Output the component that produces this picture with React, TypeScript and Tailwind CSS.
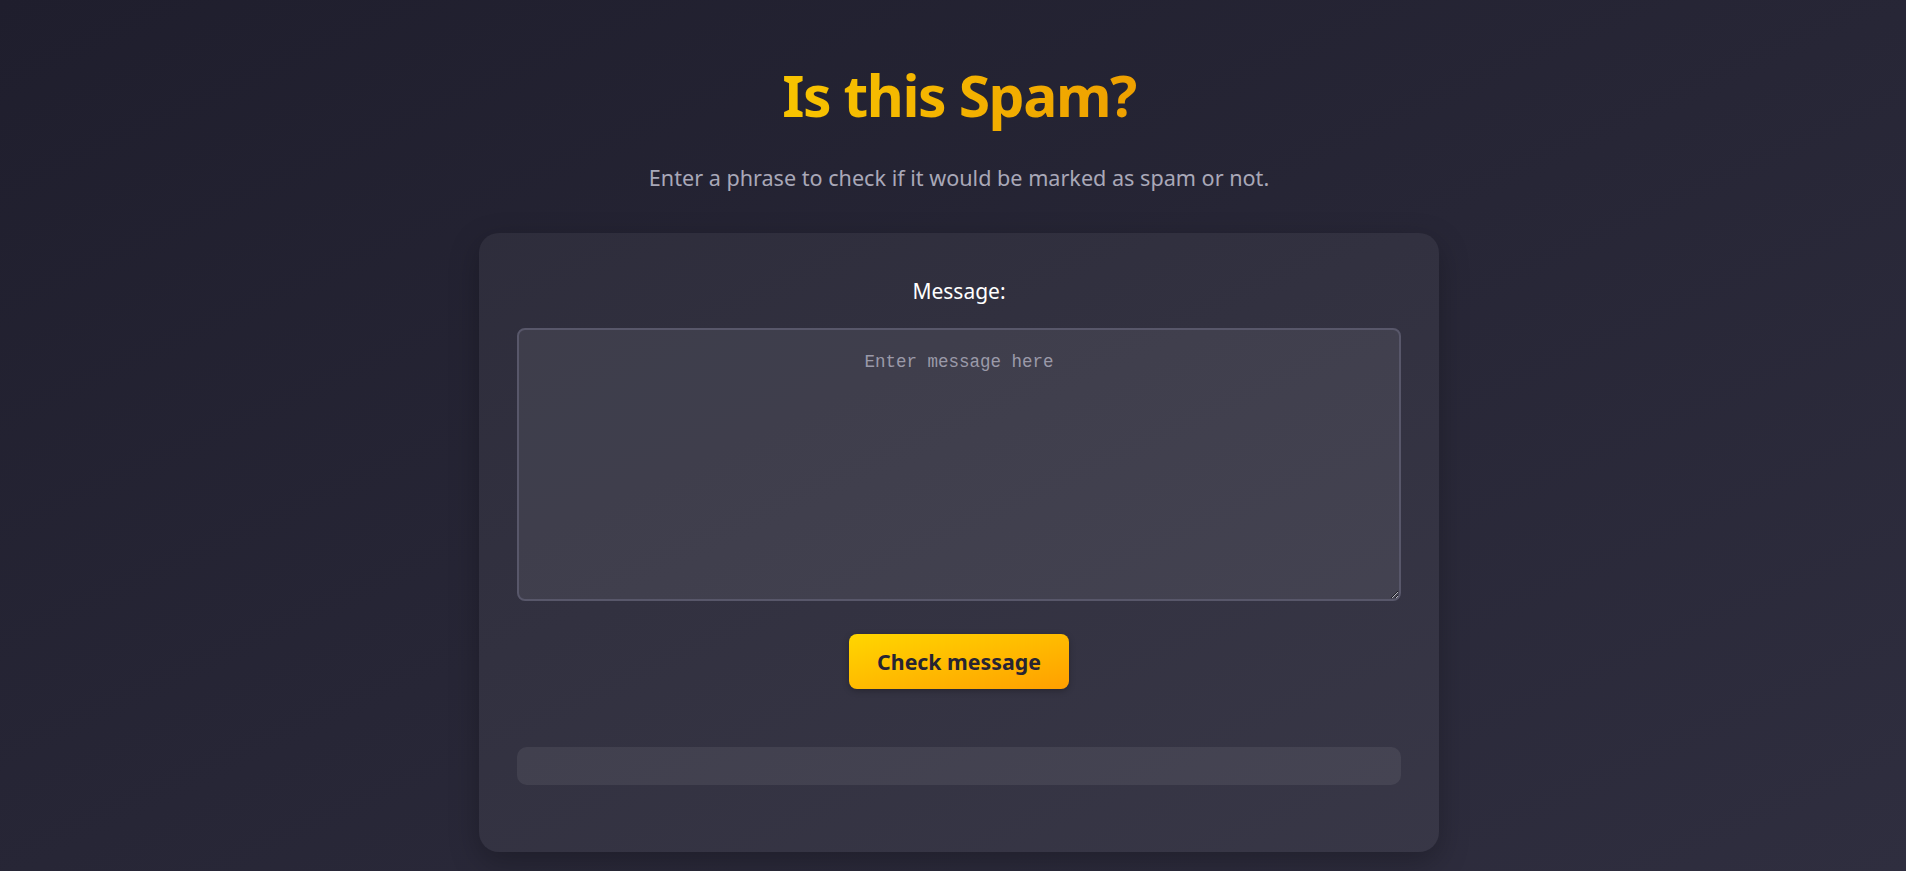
export default function App() {
  return (
    <div
      className="min-h-screen w-full bg-gradient-to-br from-[#1f1e2d] to-[#2f2e3f] pl-3"
      style={{ fontFamily: '"Noto Sans", "Open Sans", sans-serif' }}
    >
      <div className="flex flex-col items-center pt-[59px] pb-5">
        {/* Title */}
        <h1 className="bg-gradient-to-r from-[#f8c400] to-[#eea000] bg-clip-text text-[57px] font-bold leading-[72px] tracking-[-0.025em] text-transparent">
          Is this Spam?
        </h1>
        <p className="mt-[33px] text-[21.6px] leading-[28px] text-[#a9a8b8]">
          Enter a phrase to check if it would be marked as spam or not.
        </p>

        {/* Card */}
        <div className="mt-[41px] flex w-[960px] flex-col items-center rounded-[20px] bg-white/5 px-[38px] pt-[41px] pb-[67px] shadow-[0_10px_30px_rgba(0,0,0,0.25)]">
          <label className="text-[21px] leading-[34px] text-white">Message:</label>
          <textarea
            placeholder="Enter message here"
            className="mt-[20px] h-[273px] w-full rounded-[8px] border-2 border-[#58576a] bg-white/[0.07] p-[19px] text-center text-[17.5px] leading-[26px] text-white outline-none [color-scheme:dark] placeholder:text-[#9b9aa9]"
            style={{ fontFamily: '"Liberation Mono", monospace' }}
          />
          <button className="mt-[33px] h-[55px] w-[220px] rounded-[8px] bg-gradient-to-br from-[#ffd600] to-[#ff9f00] text-[21.3px] font-bold text-[#272433] shadow-[0_2px_6px_rgba(0,0,0,0.25)]">
            Check message
          </button>
          <div className="mt-[58px] h-[38px] w-full rounded-[10px] bg-white/[0.07]" />
        </div>
      </div>
    </div>
  );
}
